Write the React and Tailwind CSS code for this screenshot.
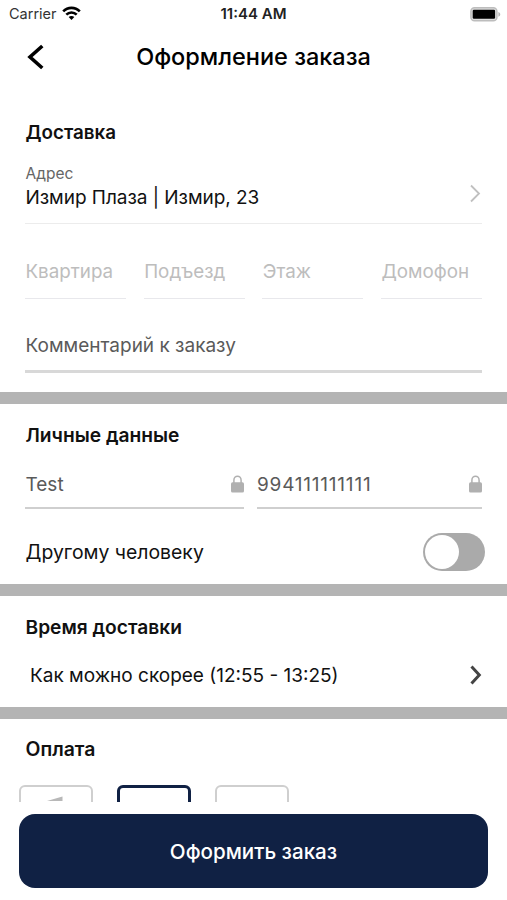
import { useState } from 'react';

const addressFields = ['Квартира', 'Подъезд', 'Этаж', 'Домофон'];

function WifiIcon() {
  return (
    <svg width="19" height="15" viewBox="0 0 19 15" fill="none" stroke="#000" strokeWidth="2.6">
      <path d="M1.2 5.4C5.8 0.7 13.2 0.7 17.8 5.4" />
      <path d="M4.3 8.7C7.2 5.8 11.8 5.8 14.7 8.7" />
      <path d="M9.5 14L6.7 11.1C8.3 9.6 10.7 9.6 12.3 11.1Z" fill="#000" stroke="none" />
    </svg>
  );
}

function BatteryIcon() {
  return (
    <svg width="32" height="15" viewBox="0 0 32 15">
      <rect x="0.9" y="0.8" width="26" height="13" rx="3.6" fill="#ddd" stroke="#bdbdbd" strokeWidth="1.5" />
      <rect x="2.7" y="2.8" width="22.4" height="9" rx="1.2" fill="#000" />
      <path d="M28.4 5C30.9 6 30.9 8.8 28.4 9.8Z" fill="#b5b5b5" />
    </svg>
  );
}

function LockIcon() {
  return (
    <svg width="13" height="18" viewBox="0 0 13 18" className="mb-[2px] shrink-0">
      <path d="M2.9 8V5.2a3.6 4 0 0 1 7.2 0V8" fill="none" stroke="#b0b0b0" strokeWidth="1.5" />
      <rect x="0" y="7.3" width="13" height="10.2" rx="1.6" fill="#b0b0b0" />
    </svg>
  );
}

function Divider() {
  return <div className="h-3 shrink-0 bg-[#b4b4b4]" />;
}

function SectionTitle({ children, className = '' }) {
  return <h2 className={`h-7 pl-[0.5px] leading-7 font-semibold ${className}`}>{children}</h2>;
}

function LockedField({ value, className }) {
  return (
    <div className={`flex h-[47px] items-center justify-between border-b-2 border-[#cfcfcf] text-[19px] text-[#5a5a5a] ${className}`}>
      <span className="pt-[1px] pl-[0.5px]">{value}</span>
      <LockIcon />
    </div>
  );
}

export default function App() {
  const [otherPerson, setOtherPerson] = useState(false);

  return (
    <div className="flex h-[900px] w-[507px] flex-col overflow-hidden bg-white font-['Inter','Liberation_Sans',sans-serif] text-[#111]">
      <div className="grid h-7 shrink-0 grid-cols-3 items-center pr-[5px] pl-[9px] text-[14.5px]">
        <div className="flex items-center gap-[5px] text-[#333]">
          <span>Carrier</span>
          <div className="-mt-[2px]">
            <WifiIcon />
          </div>
        </div>
        <span className="pr-1 text-center text-[15px] font-semibold text-[#222]">11:44 AM</span>
        <div className="flex justify-end">
          <BatteryIcon />
        </div>
      </div>

      <header className="flex h-[58px] shrink-0 items-center px-[27px]">
        <button className="w-10">
          <svg width="18" height="26" viewBox="0 0 18 26" fill="none" stroke="#000" strokeWidth="3.6">
            <path d="M15.3 2L3 13L15.3 24" />
          </svg>
        </button>
        <h1 className="flex-1 text-center text-[23.5px] font-medium text-black">Оформление заказа</h1>
        <div className="w-10" />
      </header>

      <main className="flex h-[716px] shrink-0 flex-col overflow-hidden">
        <section className="h-[306px] shrink-0 px-[25px] pt-8">
          <SectionTitle className="pt-px text-[18.8px]">Доставка</SectionTitle>
          <div className="flex h-[78px] items-center justify-between border-b border-[#ececec] pt-[2px]">
            <div className="pl-[0.5px]">
              <p className="text-[15.5px] leading-6 text-[#666]">Адрес</p>
              <p className="text-[19px] leading-6 tracking-[-0.04px]">Измир Плаза | Измир, 23</p>
            </div>
            <svg width="12" height="19" viewBox="0 0 12 19" fill="none" stroke="#c0c0c0" strokeWidth="1.8" className="mt-[16px] mr-px">
              <path d="M2 1.5L10 9.5L2 17.5" />
            </svg>
          </div>
          <div className="flex justify-between">
            {addressFields.map((label) => (
              <div key={label} className="flex h-[75px] w-[101px] items-center border-b border-[#e8e8ec] pt-[22px] pl-[0.5px] text-[18.8px] text-[#bdbdbd]">
                {label}
              </div>
            ))}
          </div>
          <div className="flex h-[74px] items-center border-b-3 border-[#d8d8d8] pt-[23px] pl-[0.5px] text-[19px] text-[#5a5a5a]">
            Комментарий к заказу
          </div>
        </section>

        <Divider />

        <section className="h-[180px] shrink-0 px-[25px] pt-[17px]">
          <SectionTitle className="text-[19.2px]">Личные данные</SectionTitle>
          <div className="flex gap-[13px] pt-[13px]">
            <LockedField value="Test" className="w-[219px]" />
            <LockedField value="994111111111" className="w-[226px] tracking-[0.78px]" />
          </div>
          <div className="-mr-[3px] mt-6 flex h-[38px] items-center justify-between text-[19.4px]">
            <span className="pt-[2px] pl-[0.5px]">Другому человеку</span>
            <button
              onClick={() => setOtherPerson(!otherPerson)}
              className={`flex h-[38px] w-[62px] items-center rounded-full bg-[#aaa] px-[2px] ${otherPerson ? 'justify-end' : ''}`}
            >
              <span className="h-[34px] w-[34px] rounded-full bg-white" />
            </button>
          </div>
        </section>

        <Divider />

        <section className="h-[111px] shrink-0 px-[25px] pt-[17px]">
          <SectionTitle className="text-[19.2px]">Время доставки</SectionTitle>
          <div className="flex h-[68px] items-center justify-between pl-[5px] text-[19px]">
            <span className="pt-[2px]">Как можно скорее (12:55 - 13:25)</span>
            <svg width="13" height="20" viewBox="0 0 13 20" fill="none" stroke="#444" strokeWidth="3">
              <path d="M2.5 1.5L10.3 10L2.5 18.5" />
            </svg>
          </div>
        </section>

        <Divider />

        <section className="shrink-0 px-[19px] pt-4">
          <div className="pl-[6px]">
            <SectionTitle className="text-[19.4px]">Оплата</SectionTitle>
          </div>
          <div className="mt-[22px] flex gap-6">
            <div className="flex h-[74px] w-[74px] justify-center rounded-md border-2 border-[#cfcfcf] pt-[9px]">
              <svg width="32" height="24" viewBox="0 0 32 24">
                <path d="M7 5L22.5 0.6V5Z" fill="#b8b8b8" />
              </svg>
            </div>
            <div className="h-[74px] w-[74px] rounded-md border-3 border-[#102144]" />
            <div className="h-[74px] w-[74px] rounded-md border-2 border-[#cfcfcf]" />
          </div>
        </section>
      </main>

      <footer className="px-[19px] pt-3">
        <button className="h-[74px] w-full rounded-2xl bg-[#102144] pt-[2px] text-[20.6px] font-medium text-white">
          Оформить заказ
        </button>
      </footer>
    </div>
  );
}
